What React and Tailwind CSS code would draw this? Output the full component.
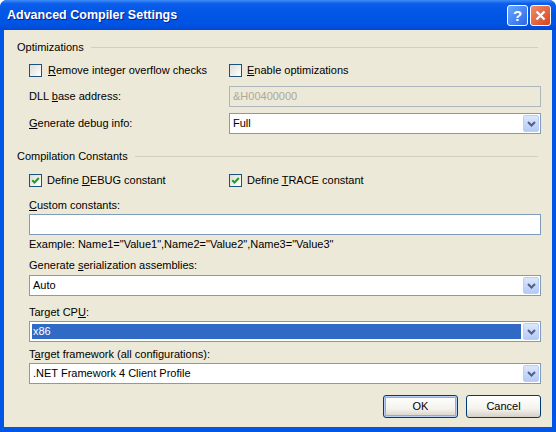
import React from "react";

function Checkbox({ checked }) {
  return (
    <span className="w-[13px] h-[13px] shrink-0 border border-[#1C5180] bg-[linear-gradient(135deg,#DCDCD7,#FFFFFF)] flex items-center justify-center">
      {checked && (
        <svg width="9" height="9" viewBox="0 0 9 9">
          <path d="M1.2 4.2 L3.5 6.5 L7.8 2" stroke="#21A121" strokeWidth="2" fill="none" />
        </svg>
      )}
    </span>
  );
}

function DropButton() {
  return (
    <span className="w-[16px] h-[17px] shrink-0 rounded-[2px] border border-[#BCCEF5] bg-[linear-gradient(180deg,#DCE7FD,#B6CAF6)] flex items-center justify-center">
      <svg width="9" height="6" viewBox="0 0 9 6">
        <path d="M1 1 L4.5 4.5 L8 1" stroke="#4D6185" strokeWidth="2" fill="none" />
      </svg>
    </span>
  );
}

function Combo({ value, selected }) {
  return (
    <div className="h-[21px] border border-[#7F9DB9] bg-white flex items-center p-px">
      <div
        className={
          selected
            ? "flex-1 h-[15px] mr-[2px] ml-px flex items-center pl-px bg-[#316AC5] text-white"
            : "flex-1 h-[15px] mr-[2px] ml-px flex items-center pl-px"
        }
      >
        {value}
      </div>
      <DropButton />
    </div>
  );
}

function Header({ text }) {
  return (
    <div className="-ml-[12px] flex items-center h-[13px]">
      <span>{text}</span>
      <div className="ml-[7px] mr-[3px] flex-1 h-px bg-[#D0D0BF]" />
    </div>
  );
}

function Label({ children, className = "" }) {
  return <div className={"h-[13px] leading-[13px] " + className}>{children}</div>;
}

function XpButton({ children, isDefault }) {
  return (
    <button
      className={
        "w-[75px] h-[23px] rounded-[3px] border border-[#003C74] bg-[linear-gradient(180deg,#FFFFFF,#F4F3EE_60%,#D6D0C5)] text-[11px] text-black flex items-center justify-center " +
        (isDefault ? "shadow-[inset_0_0_0_1px_#B8D0F5,inset_0_0_0_2px_#89ADE4]" : "")
      }
    >
      {children}
    </button>
  );
}

export default function App() {
  return (
    <div className="w-[556px] h-[432px] bg-white font-['Liberation_Sans',Arial,sans-serif]">
      <div className="w-full h-full rounded-t-[7px] bg-[#0055E5] flex flex-col">
        {/* title bar */}
        <div className="h-[30px] shrink-0 rounded-t-[7px] bg-[linear-gradient(180deg,#3D8DF7_0%,#0C5EEB_12%,#0056E6_45%,#0054E2_80%,#0049D6_100%)] flex items-center justify-between pl-[7px] pr-[5px]">
          <span className="text-white font-bold text-[12.5px] [text-shadow:1px_1px_0_#0A1E8A]">
            Advanced Compiler Settings
          </span>
          <div className="flex gap-[2px]">
            <div className="w-[21px] h-[21px] rounded-[3px] border border-white bg-[linear-gradient(135deg,#6AA6FF,#2A68EA)] flex items-center justify-center text-white font-bold text-[15px] leading-none">
              ?
            </div>
            <div className="w-[21px] h-[21px] rounded-[3px] border border-white bg-[linear-gradient(135deg,#F08C6C,#D9441D)] flex items-center justify-center">
              <svg width="11" height="11" viewBox="0 0 11 11">
                <path d="M1.5 1.5 L9.5 9.5 M9.5 1.5 L1.5 9.5" stroke="white" strokeWidth="2.2" />
              </svg>
            </div>
          </div>
        </div>

        {/* body */}
        <div className="flex-1 mx-[4px] mb-[5px] bg-[#ECE9D8] pl-[25px] pr-[11px] flex flex-col text-[11px] text-black">
          <div className="mt-[11px]">
            <Header text="Optimizations" />
          </div>

          <div className="mt-[10px] flex h-[13px]">
            <div className="w-[200px] flex items-center gap-[6px]">
              <Checkbox />
              <span>
                <u>R</u>emove integer overflow checks
              </span>
            </div>
            <div className="flex items-center gap-[5px]">
              <Checkbox />
              <span>
                <u>E</u>nable optimizations
              </span>
            </div>
          </div>

          <div className="mt-[9px] grid grid-cols-[200px_1fr] items-center">
            <Label>
              DLL <u>b</u>ase address:
            </Label>
            <div className="h-[21px] border border-[#AFB6BE] flex items-center pl-[3px] text-[#ACA899]">
              &amp;H00400000
            </div>
          </div>

          <div className="mt-[6px] grid grid-cols-[200px_1fr] items-center">
            <Label>
              <u>G</u>enerate debug info:
            </Label>
            <Combo value="Full" />
          </div>

          <div className="mt-[16px]">
            <Header text="Compilation Constants" />
          </div>

          <div className="mt-[11px] flex h-[13px]">
            <div className="w-[200px] flex items-center gap-[5px]">
              <Checkbox checked />
              <span>
                Define <u>D</u>EBUG constant
              </span>
            </div>
            <div className="flex items-center gap-[5px]">
              <Checkbox checked />
              <span>
                Define <u>T</u>RACE constant
              </span>
            </div>
          </div>

          <Label className="mt-[12px]">
            <u>C</u>ustom constants:
          </Label>
          <div className="mt-[2px] h-[21px] border border-[#7F9DB9] bg-white" />

          <Label className="mt-[3px]">
            {'Example: Name1="Value1",Name2="Value2",Name3="Value3"'}
          </Label>

          <Label className="mt-[8px]">
            Generate <u>s</u>erialization assemblies:
          </Label>
          <div className="mt-[3px]">
            <Combo value="Auto" />
          </div>

          <Label className="mt-[10px]">
            Target CP<u>U</u>:
          </Label>
          <div className="mt-[2px]">
            <Combo value="x86" selected />
          </div>

          <Label className="mt-[6px]">
            T<u>a</u>rget framework (all configurations):
          </Label>
          <div className="mt-[2px]">
            <Combo value=".NET Framework 4 Client Profile" />
          </div>

          <div className="mt-[11px] flex justify-end gap-[8px]">
            <XpButton isDefault>OK</XpButton>
            <XpButton>Cancel</XpButton>
          </div>
        </div>
      </div>
    </div>
  );
}
